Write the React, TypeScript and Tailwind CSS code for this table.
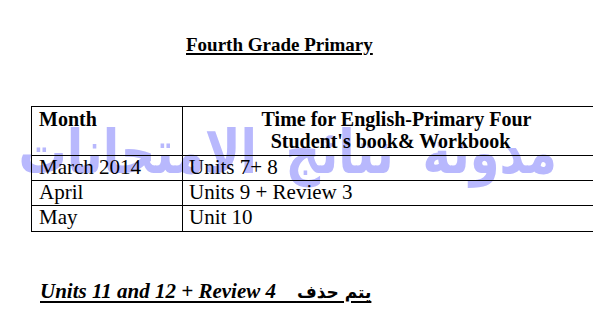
import React from "react";

export default function App() {
  const serif = { fontFamily: '"Liberation Serif", "DejaVu Sans", serif' };
  return (
    <div className="relative w-[593px] h-[323px] overflow-hidden bg-white text-black" style={serif}>
      {/* watermark */}
      <div
        dir="rtl"
        className="absolute right-[36px] top-[128px] z-0 whitespace-nowrap text-[48px] leading-[48px] font-bold text-[#b8b8fd] scale-y-125 [word-spacing:12px]"
        style={{ fontFamily: '"DejaVu Sans", sans-serif' }}
      >
        مدونة نتائج الامتحانات
      </div>

      <div className="relative z-10">
        <div className="pt-[34px] pl-[186px]">
          <span className="text-[19px] leading-[22px] font-bold underline decoration-2 underline-offset-[2px]">
            Fourth Grade Primary
          </span>
        </div>

        <div className="ml-[31px] mt-[48px] w-[580px] border border-black">
          <div className="flex h-[49px] border-b border-black">
            <div className="w-[151px] shrink-0 border-r border-black pl-[7px] pt-[1px] text-[20px] leading-[22px] font-bold">
              Month
            </div>
            <div className="flex-1 pt-[1px] text-center text-[20px] leading-[22px] font-bold">
              <div>Time for English-Primary Four</div>
              <div className="pr-[12px]">Student's book&amp; Workbook</div>
            </div>
          </div>
          {[
            ["March 2014", "Units 7+ 8"],
            ["April", "Units 9 + Review 3"],
            ["May", "Unit 10"],
          ].map(([m, u], i) => (
            <div
              key={m}
              className={
                i < 2
                  ? "flex h-[25px] border-b border-black text-[21px] leading-[22px]"
                  : "flex h-[25px] text-[21px] leading-[22px]"
              }
            >
              <div className="w-[151px] shrink-0 border-r border-black pl-[7px]">{m}</div>
              <div className="flex-1 pl-[6px]">{u}</div>
            </div>
          ))}
        </div>

        <div className="mt-[47px] pl-[40px]">
          <span className="whitespace-pre text-[21px] leading-[24px] font-bold italic underline decoration-2 underline-offset-[3px]">
            {"Units 11 and 12 + Review 4    "}
            <span className="not-italic text-[17px]" style={{ fontFamily: '"DejaVu Sans", sans-serif' }}>
              يتم حذف
            </span>
          </span>
        </div>
      </div>
    </div>
  );
}
